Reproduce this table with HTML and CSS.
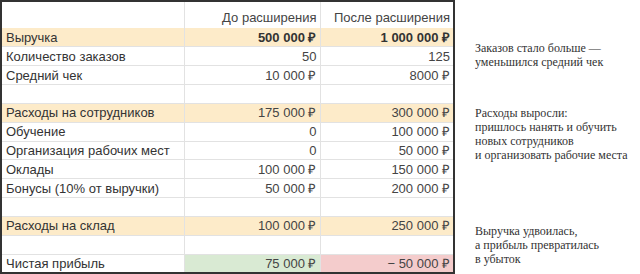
FILE: index.html
```html
<!DOCTYPE html>
<html lang="ru">
<head>
<meta charset="UTF-8" />
<title>Расширение бизнеса</title>
<link rel="stylesheet" href="styles.css">
</head>
<body>
  <div class="page">
    <table class="budget">
      <colgroup>
        <col class="col-label">
        <col class="col-before">
        <col class="col-after">
      </colgroup>
      <thead>
        <tr>
          <th></th>
          <th>До расширения</th>
          <th>После расширения</th>
        </tr>
      </thead>
      <tbody>
        <tr class="group">
          <td>Выручка</td>
          <td class="num bold">500 000 ₽</td>
          <td class="num bold">1 000 000 ₽</td>
        </tr>
        <tr>
          <td>Количество заказов</td>
          <td class="num">50</td>
          <td class="num">125</td>
        </tr>
        <tr>
          <td>Средний чек</td>
          <td class="num">10 000 ₽</td>
          <td class="num">8000 ₽</td>
        </tr>
        <tr class="blank"><td></td><td></td><td></td></tr>
        <tr class="group">
          <td>Расходы на сотрудников</td>
          <td class="num">175 000 ₽</td>
          <td class="num">300 000 ₽</td>
        </tr>
        <tr>
          <td>Обучение</td>
          <td class="num">0</td>
          <td class="num">100 000 ₽</td>
        </tr>
        <tr>
          <td>Организация рабочих мест</td>
          <td class="num">0</td>
          <td class="num">50 000 ₽</td>
        </tr>
        <tr>
          <td>Оклады</td>
          <td class="num">100 000 ₽</td>
          <td class="num">150 000 ₽</td>
        </tr>
        <tr>
          <td>Бонусы (10% от выручки)</td>
          <td class="num">50 000 ₽</td>
          <td class="num">200 000 ₽</td>
        </tr>
        <tr class="blank"><td></td><td></td><td></td></tr>
        <tr class="group">
          <td>Расходы на склад</td>
          <td class="num">100 000 ₽</td>
          <td class="num">250 000 ₽</td>
        </tr>
        <tr class="blank"><td></td><td></td><td></td></tr>
        <tr class="total">
          <td>Чистая прибыль</td>
          <td class="num profit">75 000 ₽</td>
          <td class="num loss">− 50 000 ₽</td>
        </tr>
      </tbody>
    </table>

    <div class="notes">
      <p class="note note-orders">Заказов стало больше —<br>уменьшился средний чек</p>
      <p class="note note-staff">Расходы выросли:<br>пришлось нанять и обучить<br>новых сотрудников<br>и организовать рабочие места</p>
      <p class="note note-result">Выручка удвоилась,<br>а прибыль превратилась<br>в убыток</p>
    </div>
  </div>
</body>
</html>
```

FILE: styles.css
```css
* {
  box-sizing: border-box;
}

body {
  margin: 0;
  background: #fff;
  color: #333;
  font-family: "Liberation Sans", Arial, sans-serif;
}

.page {
  display: flex;
  align-items: flex-start;
}

/* Spreadsheet table */
.budget {
  border-collapse: collapse;
  table-layout: fixed;
  width: 453px;
  border: 2px solid #333;
  font-size: 13px;
}

.col-label { width: 183px; }
.col-before { width: 136px; }
.col-after { width: 134px; }

.budget th,
.budget td {
  height: 18.85px;
  padding: 0 3px 0 4px;
  border-bottom: 1px solid #e2e2e2;
  border-right: 1px solid #e2e2e2;
  white-space: nowrap;
  line-height: 15px;
}

.budget thead th {
  height: 27px;
  font-weight: normal;
  text-align: right;
  vertical-align: bottom;
  padding-bottom: 3px;
  color: #444;
  border-bottom: none;
}

.budget .num {
  text-align: right;
  color: #444;
}

.budget .bold {
  font-weight: bold;
  color: #333;
}

.group td {
  background: #fdebc9;
}

.budget .profit {
  background: #d9ead3;
}

.budget .loss {
  background: #f4cccc;
}

/* Side notes */
.notes {
  display: flex;
  flex-direction: column;
  padding-left: 20px;
  font-family: "Liberation Serif", "Times New Roman", serif;
  font-size: 12px;
  line-height: 14px;
  color: #333;
}

.note {
  margin: 0;
}

.note-orders { margin-top: 41px; }
.note-staff { margin-top: 37px; }
.note-result { margin-top: 62px; }
```
